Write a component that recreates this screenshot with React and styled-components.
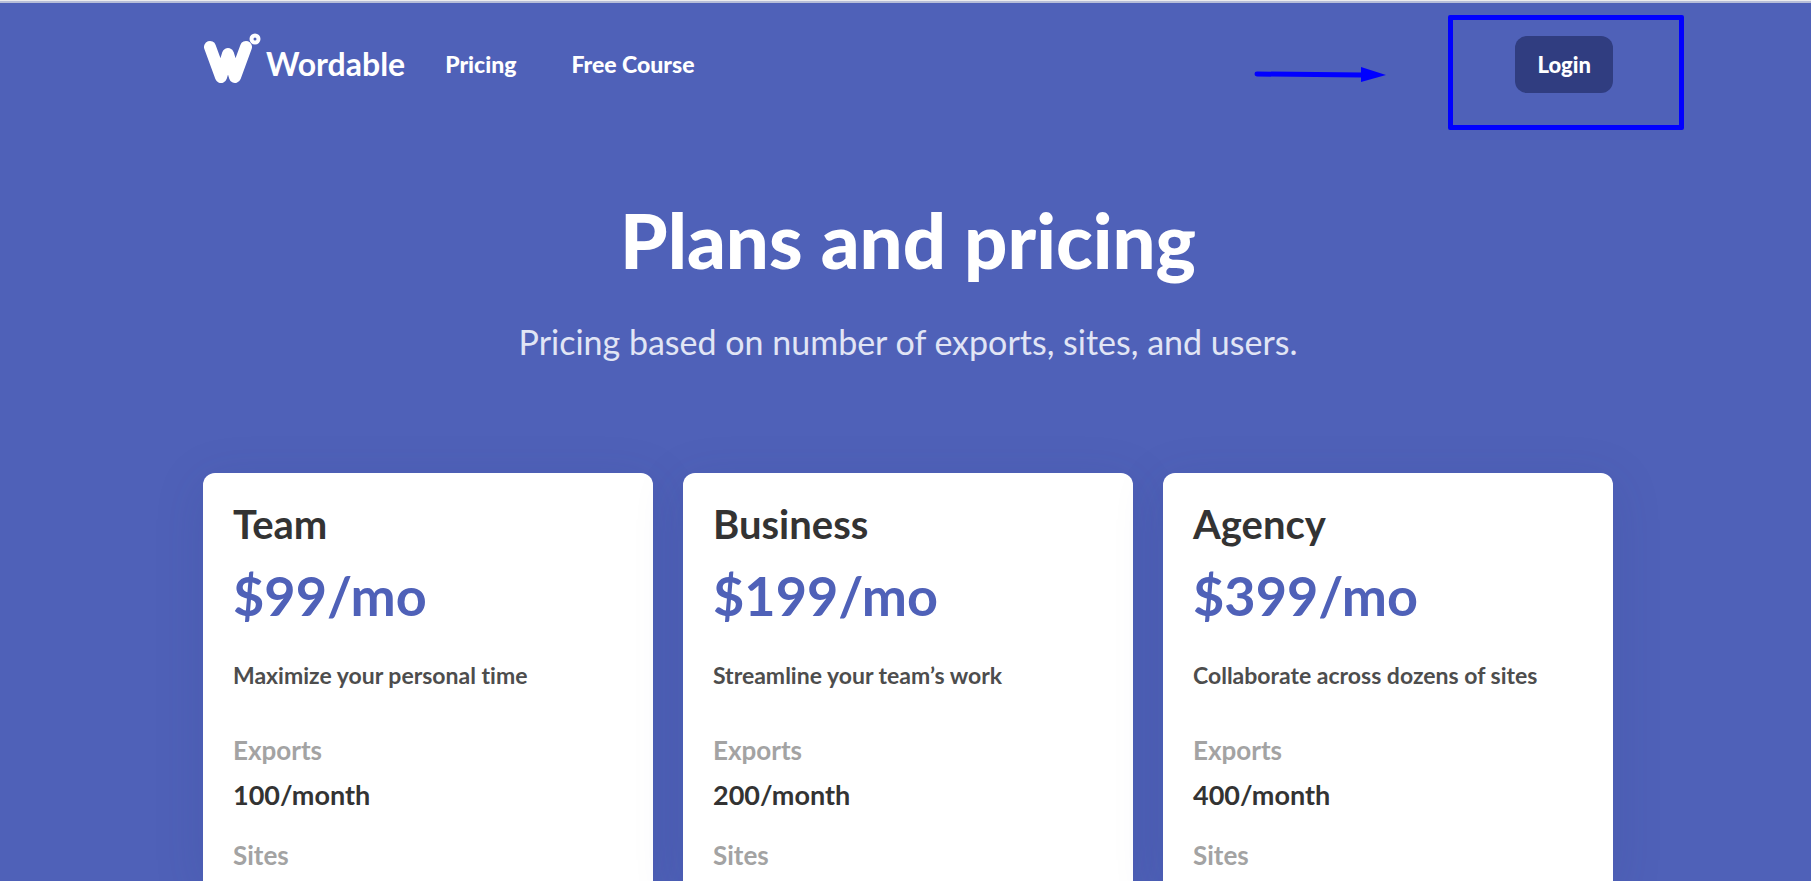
import React from "react";

import styled, { createGlobalStyle } from "styled-components";

const plans = [
  {
    name: "Team",
    price: "$99/mo",
    tagline: "Maximize your personal time",
    exports: "100/month",
  },
  {
    name: "Business",
    price: "$199/mo",
    tagline: "Streamline your team’s work",
    exports: "200/month",
  },
  {
    name: "Agency",
    price: "$399/mo",
    tagline: "Collaborate across dozens of sites",
    exports: "400/month",
  },
];

//Logo
const LogoMark = () => (
  <svg width="58" height="52" viewBox="0 0 58 52" aria-hidden="true">
    <g
      fill="none"
      stroke="#fff"
      strokeWidth="12"
      strokeLinecap="round"
      strokeLinejoin="round"
    >
      <path d="M7 14 L18 44 L25 21 L32 44 L43 14" />
    </g>
    <path d="M18 30 L25 20 L32 30 L28 42 L22 42 Z" fill="#fff" />
    <circle cx="52" cy="6" r="3.5" fill="none" stroke="#fff" strokeWidth="4" />
  </svg>
);

const Arrow = () => (
  <ArrowSvg width="132" height="16" viewBox="0 0 132 16" aria-hidden="true">
    <path d="M3 7 L108 8" stroke="#0000ff" strokeWidth="5" strokeLinecap="round" />
    <path d="M107 0 L132 8 L107 15 Z" fill="#0000ff" />
  </ArrowSvg>
);

const Plan = ({ plan }) => (
  <Card>
    <PlanName>{plan.name}</PlanName>
    <Price>{plan.price}</Price>
    <Tagline>{plan.tagline}</Tagline>
    <Features>
      <dt>Exports</dt>
      <dd>{plan.exports}</dd>
      <dt>Sites</dt>
    </Features>
  </Card>
);

const App = () => {
  return (
    <>
      <GlobalStyle />
      <Page>
        <Header>
          <Logo href="#">
            <LogoMark />
            <span>Wordable</span>
          </Logo>
          <Nav>
            <a href="#pricing">Pricing</a>
            <a href="#course">Free Course</a>
          </Nav>
          <LoginArea>
            <Arrow />
            <Highlight />
            <LoginButton type="button">Login</LoginButton>
          </LoginArea>
        </Header>
        <Hero>
          <h1>Plans and pricing</h1>
          <p>Pricing based on number of exports, sites, and users.</p>
        </Hero>
        <Plans>
          {plans.map((plan) => (
            <Plan key={plan.name} plan={plan} />
          ))}
        </Plans>
      </Page>
    </>
  );
};

const GlobalStyle = createGlobalStyle`
  * {
    box-sizing: border-box;
    margin: 0;
    padding: 0;
  }
  body {
    background: #4f61b8;
    font-family: Lato, "Liberation Sans", sans-serif;
    font-variant-ligatures: none;
  }
  a {
    color: inherit;
    text-decoration: none;
  }
`;
const Page = styled.div`
  min-height: 100vh;
  display: flex;
  flex-direction: column;
  align-items: center;
  overflow: hidden;
  padding: 2px 0 0 5px;
  border-top: 1px solid #ececee;
  box-shadow: inset 0 2px 0 #b8bed8;
  color: white;
`;
const Header = styled.header`
  width: 100%;
  max-width: 1410px;
  margin-top: 30px;
  display: flex;
  align-items: center;
`;
const Logo = styled.a`
  display: flex;
  align-items: center;
  gap: 5px;
  font-size: 32px;
  line-height: 40px;
  font-weight: 700;
  svg {
    margin-bottom: 10px;
  }
`;
const Nav = styled.nav`
  display: flex;
  gap: 55px;
  margin-left: 40px;
  font-size: 23px;
  line-height: 28px;
  font-weight: 900;
`;
const LoginArea = styled.div`
  position: relative;
  margin-left: auto;
`;
const LoginButton = styled.button`
  position: relative;
  display: block;
  padding: 14px 22px;
  border: none;
  border-radius: 12px;
  background: #303d80;
  color: white;
  font-family: inherit;
  font-size: 22px;
  line-height: 29px;
  font-weight: 900;
  cursor: pointer;
`;
const Highlight = styled.div`
  position: absolute;
  top: -21px;
  right: -71px;
  width: 236px;
  height: 115px;
  border: 5px solid #0000ff;
  border-radius: 2px;
`;
const ArrowSvg = styled.svg`
  position: absolute;
  top: 31px;
  right: 227px;
`;
const Hero = styled.section`
  margin-top: 105px;
  text-align: center;
  h1 {
    font-size: 76px;
    line-height: 80px;
    font-weight: 900;
  }
  p {
    margin-top: 42px;
    font-size: 34px;
    line-height: 40px;
    font-weight: 400;
    color: #e1e5f5;
  }
`;
const Plans = styled.main`
  width: 100%;
  max-width: 1410px;
  flex: 1;
  display: grid;
  grid-template-columns: repeat(3, 1fr);
  gap: 30px;
  margin-top: 111px;
`;
const Card = styled.article`
  padding: 29px 30px 12px;
  border-radius: 12px 12px 0 0;
  background: white;
  box-shadow: 0 10px 50px rgba(48, 61, 128, 0.15);
  color: #333333;
`;
const PlanName = styled.h2`
  font-size: 40px;
  line-height: 44px;
  font-weight: 700;
`;
const Price = styled.p`
  margin-top: 20px;
  font-size: 54px;
  line-height: 60px;
  font-weight: 700;
  color: #4f61b8;
`;
const Tagline = styled.p`
  margin-top: 34px;
  font-size: 23px;
  line-height: 30px;
  font-weight: 700;
  color: #4d4d4d;
`;
const Features = styled.dl`
  margin-top: 44px;
  font-size: 26px;
  line-height: 32px;
  font-weight: 700;
  dt {
    color: #a3a3a3;
  }
  dd {
    margin: 13px 0 28px;
    font-size: 27px;
  }
`;
export default App;
